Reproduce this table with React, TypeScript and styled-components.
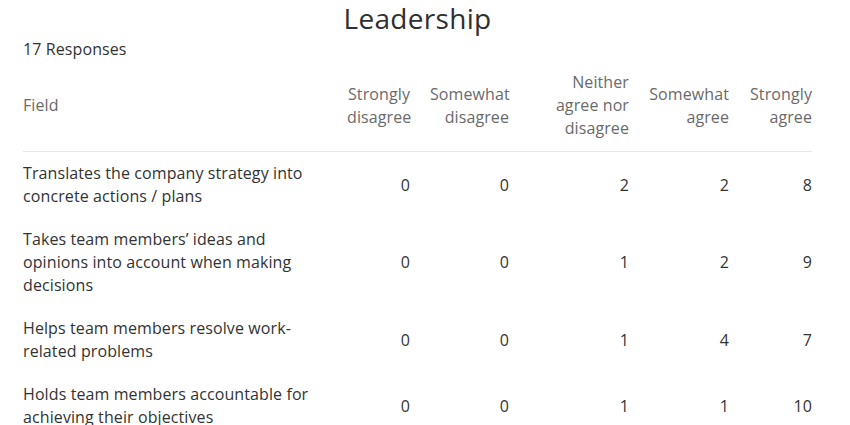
import React from "react";
import styled, { createGlobalStyle } from "styled-components";

const GlobalStyle = createGlobalStyle`
  html, body { margin: 0; padding: 0; background: #ffffff; }
  body { font-family: "Open Sans", "Liberation Sans", sans-serif; color: #333333; }
`;

const Page = styled.div`
  width: 789px;
  padding-left: 23px;
`;

const Title = styled.h1`
  margin: 0 0 2px;
  font-size: 28px;
  line-height: 36px;
  font-weight: 400;
  letter-spacing: 0.3px;
  text-align: center;
  color: #2f2f2f;
`;

const Responses = styled.div`
  font-size: 16px;
  line-height: 23px;
  letter-spacing: 0.1px;
  color: #333333;
`;

const COLS = "304px 83px 99px 120px 100px 83px";

const Row = styled.div<{ $header?: boolean }>`
  display: grid;
  grid-template-columns: ${COLS};
  align-items: center;
  font-size: 16px;
  line-height: 23px;
  letter-spacing: 0.1px;
  padding: ${(p) => (p.$header ? "10px 0 11px" : "10px 0")};
  border-bottom: ${(p) => (p.$header ? "1px solid #e7e7e7" : "none")};
  color: ${(p) => (p.$header ? "#6a6a6a" : "#333333")};
`;

const FieldCell = styled.div`
  padding-right: 10px;
`;

const NumCell = styled.div`
  padding-left: 20px;
  text-align: right;
`;

const headers = [
  "Strongly disagree",
  "Somewhat disagree",
  "Neither agree nor disagree",
  "Somewhat agree",
  "Strongly agree",
];

const rows: { label: string; values: number[] }[] = [
  { label: "Translates the company strategy into concrete actions / plans", values: [0, 0, 2, 2, 8] },
  { label: "Takes team members’ ideas and opinions into account when making decisions", values: [0, 0, 1, 2, 9] },
  { label: "Helps team members resolve work-related problems", values: [0, 0, 1, 4, 7] },
  { label: "Holds team members accountable for achieving their objectives", values: [0, 0, 1, 1, 10] },
];

export default function App() {
  return (
    <>
      <GlobalStyle />
      <Page>
        <Title>Leadership</Title>
        <Responses>17 Responses</Responses>
        <Row $header>
          <FieldCell>Field</FieldCell>
          {headers.map((h) => (
            <NumCell key={h}>{h}</NumCell>
          ))}
        </Row>
        {rows.map((r) => (
          <Row key={r.label}>
            <FieldCell>{r.label}</FieldCell>
            {r.values.map((v, i) => (
              <NumCell key={i}>{v}</NumCell>
            ))}
          </Row>
        ))}
      </Page>
    </>
  );
}
